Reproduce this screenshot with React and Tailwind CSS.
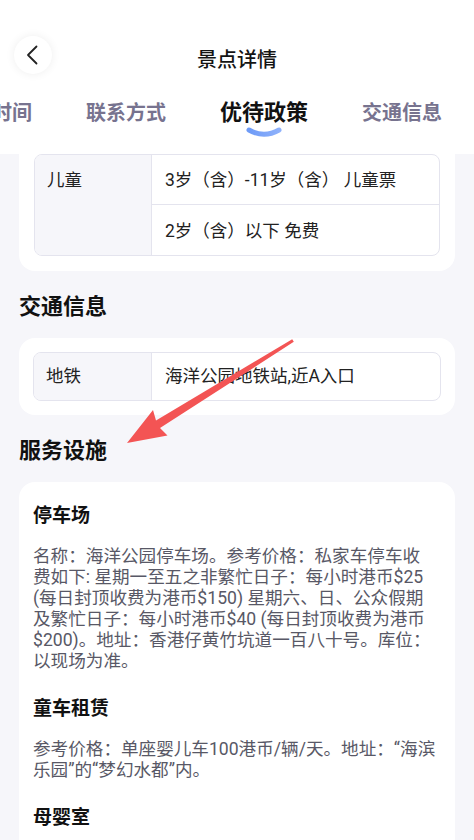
import React from "react";

const FONT = { fontFamily: 'Roboto, "Noto Sans CJK SC", "Noto Sans", sans-serif' };

const tabs = [
  { label: "开放时间" },
  { label: "联系方式" },
  { label: "优待政策", active: true },
  { label: "交通信息" },
];

const services = [
  {
    title: "停车场",
    text: "名称：海洋公园停车场。参考价格：私家车停车收费如下: 星期一至五之非繁忙日子：每小时港币$25 (每日封顶收费为港币$150) 星期六、日、公众假期及繁忙日子：每小时港币$40 (每日封顶收费为港币$200)。地址：香港仔黄竹坑道一百八十号。库位：以现场为准。",
    cls: "",
  },
  {
    title: "童车租赁",
    text: "参考价格：单座婴儿车100港币/辆/天。地址：“海滨乐园”的“梦幻水都”内。",
    cls: "mr-[-5px]",
  },
  { title: "母婴室", text: "" },
];

const Header = () => (
  <div className="h-[154px] bg-white overflow-hidden">
    {/* Top bar */}
    <div className="flex h-[92px]">
      <div className="w-[66px] pl-[14px] pt-[36px]">
        <button className="w-[38px] h-[38px] rounded-full bg-white shadow-[0_0_10px_rgba(0,0,0,0.07)] flex items-center justify-center">
          <svg width="14" height="22" viewBox="0 0 14 22" fill="none">
            <path d="M10.5 2.5 L2 11 L10.5 19.5" stroke="#222" strokeWidth="1.8" strokeLinecap="round" strokeLinejoin="round" />
          </svg>
        </button>
      </div>
      <div className="flex-1 pt-[46px] text-center text-[20px] leading-[28px] font-medium text-[#141414]">
        景点详情
      </div>
      <div className="w-[66px]" />
    </div>

    {/* Tabs */}
    <div className="overflow-hidden pt-[7px]">
      <div className="flex items-start gap-[54px] ml-[-48px] whitespace-nowrap">
        {tabs.map((t) =>
          t.active ? (
            <div key={t.label} className="flex flex-col items-center">
              <span className="text-[22px] leading-[28px] font-bold text-[#111]">{t.label}</span>
              <svg width="36" height="11" viewBox="0 0 36 11">
                <defs>
                  <linearGradient id="ind" x1="0" x2="1" y1="0" y2="0">
                    <stop offset="0" stopColor="#6e9bf7" />
                    <stop offset="1" stopColor="#8eb1fb" />
                  </linearGradient>
                </defs>
                <path d="M3 3 Q18 11.5 33 3" stroke="url(#ind)" strokeWidth="5" strokeLinecap="round" fill="none" />
              </svg>
            </div>
          ) : (
            <span key={t.label} className="text-[20px] leading-[28px] font-semibold text-[#77738f]">
              {t.label}
            </span>
          )
        )}
      </div>
    </div>
  </div>
);

const SectionTitle = ({ children }) => (
  <h2 className="text-[22px] leading-[30px] font-bold text-[#111] mt-[21px] mb-[16px]">{children}</h2>
);

const Arrow = () => (
  <svg className="absolute left-0 top-0 pointer-events-none" width="474" height="840" viewBox="0 0 474 840">
    <polygon
      points="127,443 153,410 156,420.5 292.2,339.2 293.8,341.8 160,428 167.5,435.5"
      fill="#f35454"
      strokeLinejoin="round"
    />
  </svg>
);

export default function App() {
  return (
    <div className="relative h-[840px] overflow-hidden bg-[#f6f6fa]" style={FONT}>
      <Header />

      <div className="px-[19px]">
        {/* Policy card (scrolled) */}
        <div className="bg-white rounded-b-[16px] px-[15px] pb-[15px]">
          <div className="flex border border-[#e4e4ee] rounded-[8px] overflow-hidden text-[17.5px] text-[#222]">
            <div className="w-[117px] bg-[#f6f6fa] border-r border-[#e4e4ee] pl-[12px] pt-[12px]">
              <span className="leading-[26px]">儿童</span>
            </div>
            <div className="flex-1">
              <div className="h-[50px] flex items-center pl-[13px] pt-[2px] border-b border-[#e4e4ee]">
                3岁（含）-11岁（含） 儿童票
              </div>
              <div className="h-[50px] flex items-center pl-[13px] pt-[2px]">2岁（含）以下 免费</div>
            </div>
          </div>
        </div>

        <SectionTitle>交通信息</SectionTitle>
        <div className="bg-white rounded-[16px] p-[14px]">
          <div className="flex h-[49px] border border-[#e4e4ee] rounded-[8px] overflow-hidden text-[17.5px] text-[#222]">
            <div className="w-[118px] bg-[#f6f6fa] border-r border-[#e4e4ee] pl-[12px] flex items-center">
              地铁
            </div>
            <div className="flex-1 pl-[13px] flex items-center">海洋公园地铁站,近A入口</div>
          </div>
        </div>

        <SectionTitle>服务设施</SectionTitle>
        <div className="bg-white rounded-t-[16px] pt-[21px] pl-[14px] pr-[21px] pb-[24px]">
          {services.map((s, i) => (
            <div key={s.title} className={i > 0 ? "mt-[24px]" : ""}>
              <h3 className="text-[19px] leading-[26px] font-bold text-[#111]">{s.title}</h3>
              {s.text && (
                <p className={`mt-[17px] text-[17.6px] leading-[21px] text-[#585866] ${s.cls}`}>{s.text}</p>
              )}
            </div>
          ))}
        </div>
      </div>

      <Arrow />
    </div>
  );
}
